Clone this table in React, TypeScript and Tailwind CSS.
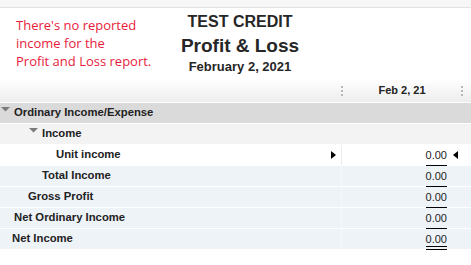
import React from "react";

type Row = {
  label: string;
  pl: string;
  bg: string;
  sep: string;
  tri?: boolean;
  value?: string;
  arrows?: boolean;
  line?: "single" | "double";
};

const rows: Row[] = [
  { label: "Ordinary Income/Expense", pl: "pl-[1px]", bg: "bg-[#dadada]", sep: "border-r-transparent", tri: true },
  { label: "Income", pl: "pl-[29px]", bg: "bg-[#f3f3f3]", sep: "border-r-transparent", tri: true },
  { label: "Unit income", pl: "pl-[56px]", bg: "bg-white", sep: "border-r-[#ebebeb]", value: "0.00", arrows: true, line: "single" },
  { label: "Total Income", pl: "pl-[42px]", bg: "bg-[#eef3f8]", sep: "border-r-[#f5f8fb]", value: "0.00", line: "single" },
  { label: "Gross Profit", pl: "pl-[28px]", bg: "bg-[#eef3f8]", sep: "border-r-[#f5f8fb]", value: "0.00", line: "single" },
  { label: "Net Ordinary Income", pl: "pl-[14px]", bg: "bg-[#eef3f8]", sep: "border-r-[#f5f8fb]", value: "0.00", line: "single" },
  { label: "Net Income", pl: "pl-[12px]", bg: "bg-[#eef3f8]", sep: "border-r-[#f5f8fb]", value: "0.00", line: "double" },
];

function DownTri() {
  return (
    <svg width="9" height="5" viewBox="0 0 9 5" className="mb-[7px] mr-[4px] shrink-0">
      <polygon points="0,0 9,0 4.5,4.5" fill="#7b7b7b" />
    </svg>
  );
}

function Dots() {
  return (
    <svg width="2" height="10" viewBox="0 0 2 10" className="shrink-0">
      <rect x="0" y="0" width="2" height="2" fill="#b9b9b9" />
      <rect x="0" y="4" width="2" height="2" fill="#b9b9b9" />
      <rect x="0" y="8" width="2" height="2" fill="#b9b9b9" />
    </svg>
  );
}

export default function App() {
  return (
    <div className="w-[471px] h-[265px] bg-white overflow-hidden text-[#222]" style={{ fontFamily: '"Liberation Sans", Arial, sans-serif' }}>
      <div className="h-[8px] bg-[#f7f7f7] border-b border-[#e2e2e2]" />
      <div className="h-[71px] grid grid-cols-[1fr_auto_1fr] pl-[9px]">
        <div
          className="pl-[7px] pt-[8px] text-[13px] leading-[18px] text-[#e81b3b]"
          style={{ fontFamily: '"Open Sans", "Noto Sans", sans-serif' }}
        >
          <div>There's no reported</div>
          <div>income for the</div>
          <div>Profit and Loss report.</div>
        </div>
        <div className="flex flex-col items-center pt-[5px] font-bold text-[#262626]">
          <div className="text-[16px] leading-[18px]">TEST CREDIT</div>
          <div className="text-[19px] leading-[22px] mt-[4px]">Profit &amp; Loss</div>
          <div className="text-[13px] leading-[16px] mt-[2px]">February 2, 2021</div>
        </div>
        <div />
      </div>
      <div className="h-[23px] flex items-center bg-gradient-to-b from-[#ffffff] to-[#ededed]">
        <div className="w-[341px]" />
        <Dots />
        <div className="w-[118px] text-center text-[11px] font-bold">Feb 2, 21</div>
        <Dots />
      </div>
      <div className="flex flex-col gap-px pt-px bg-white">
        {rows.map((r) => (
          <div key={r.label} className={`h-[20px] flex ${r.bg}`}>
            <div className={`w-[342px] shrink-0 flex items-center border-r ${r.sep} ${r.pl}`}>
              {r.tri && <DownTri />}
              <span className="text-[11.3px] font-bold leading-none">{r.label}</span>
              {r.arrows && (
                <svg width="5" height="8" viewBox="0 0 5 8" className="ml-auto mr-[5px]">
                  <polygon points="0,0 5,4 0,8" fill="#000" />
                </svg>
              )}
            </div>
            <div className="w-[120px] shrink-0 flex justify-end items-stretch pr-[4px]">
              {r.value && (
                <span
                  className={`flex items-center text-[11px] leading-none ${
                    r.line === "double"
                      ? "shadow-[inset_0_-2px_0_#eef3f8,inset_0_-3px_0_#000,0_1px_0_#000]"
                      : "shadow-[0_1px_0_#000]"
                  }`}
                >
                  {r.value}
                </span>
              )}
              <div className="w-[5px] ml-[6px] flex items-center">
                {r.arrows && (
                  <svg width="5" height="8" viewBox="0 0 5 8">
                    <polygon points="5,0 0,4 5,8" fill="#000" />
                  </svg>
                )}
              </div>
            </div>
          </div>
        ))}
      </div>
    </div>
  );
}
